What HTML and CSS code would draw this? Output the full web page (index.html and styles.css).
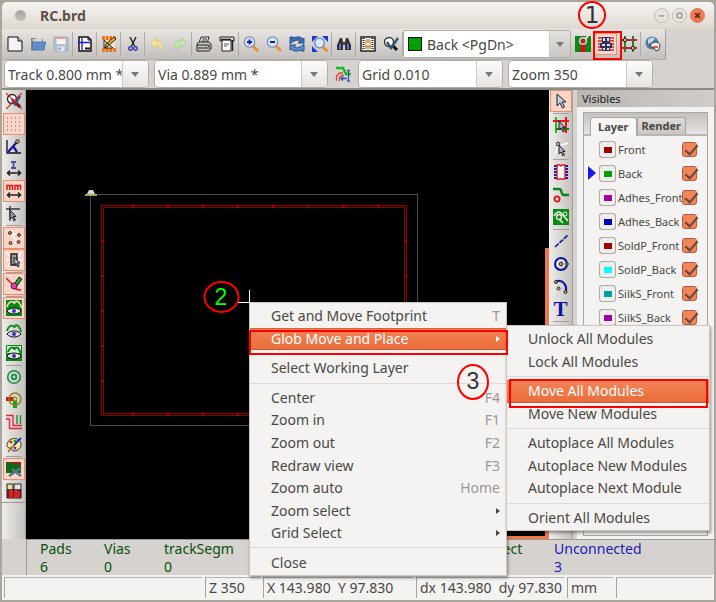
FILE: index.html
```html
<!DOCTYPE html>
<html lang="en">
<head>
    <meta charset="UTF-8">
    <meta name="viewport" content="width=device-width, initial-scale=1.0">
    <title>RC.brd</title>
    <link rel="stylesheet" href="styles.css">
</head>
<body>
    <div class="window">
        <header class="titlebar">
            <span class="title-dot"></span>
            <h1>RC.brd</h1>
            <div class="window-buttons">
                <button class="win-btn" aria-label="Minimize"><svg viewBox="0 0 14 14"><path d="M4 7.500h6"/></svg></button>
                <button class="win-btn" aria-label="Maximize"><svg viewBox="0 0 14 14"><path d="M4.500 4.500h5v5h-5z"/></svg></button>
                <button class="win-btn close" aria-label="Close window"><svg viewBox="0 0 14 14"><path d="M4.500 4.500l5 5m0-5l-5 5"/></svg></button>
            </div>
        </header>

        <!-- main toolbar -->
        <div class="toolbar">
            <div class="toolbar-strip">
                <button class="tool" aria-label="New board"><svg viewBox="0 0 16 16"><path d="M1 1h10l4 4v10H1z" fill="#f4f4f4" stroke="#111"/><path d="M11 1v4h4" fill="#ddd" stroke="#111"/></svg></button>
                <button class="tool" aria-label="Open board"><svg viewBox="0 0 16 16"><path d="M1 2h5l1 1h6v9H1z" fill="#8a8a84"/><path d="M3 3h9v6H3z" fill="#d8d8d8"/><path d="M3 6h12.500l-1.500 8H1.500z" fill="#5f8fc4" stroke="#4a78ae"/></svg></button>
                <button class="tool" aria-label="Save board"><svg viewBox="0 0 16 16"><rect x="1" y="1" width="14" height="14" rx="1" fill="#b3c0cf" stroke="#9aa9bb"/><path d="M3.500 1h9v7h-9z" fill="#f4f4f4"/><path d="M3.500 1h9v2h-9z" fill="#e09a9a"/><path d="M4.500 10.500h7V15h-7z" fill="#e4e8ec"/><path d="M5.500 11.500h2V14h-2z" fill="#8b99aa"/></svg></button>
                <span class="sep"></span>
                <button class="tool" aria-label="Page settings"><svg viewBox="0 0 16 16"><path d="M2 1h9l3 3v11H2z" fill="#fff" stroke="#111" stroke-width="1.500"/><path d="M11 1v3h3" fill="none" stroke="#111"/><path d="M5 2v12M1 6.500h12" stroke="#1616e0" stroke-width="1.300"/><path d="M8 12.500h5" stroke="#111" stroke-width="2"/></svg></button>
                <span class="sep"></span>
                <button class="tool" aria-label="Module editor"><svg viewBox="0 0 16 16"><path d="M2 3h12v10H2z" fill="#f0e3c8"/><path d="M2.500 0v4M6.200 0v4M9.800 0v4M13.500 0v4M2.500 12v4M6.200 12v4M9.800 12v4M13.500 12v4" stroke="#f36a10" stroke-width="2.600"/><path d="M4 12l1-4 8-7 2 2-8 7z" fill="#e9b21f" stroke="#222"/><path d="M12 12L3 4v8z" fill="none" stroke="#222"/></svg></button>
                <span class="sep"></span>
                <button class="tool" aria-label="Cut"><svg viewBox="0 0 16 16"><path d="M5 1l4.500 9M11 1L6.500 10" stroke="#222" stroke-width="1.400"/><circle cx="5.500" cy="12.500" r="1.800" fill="none" stroke="#2a2ab8" stroke-width="1.300"/><circle cx="10.500" cy="12.500" r="1.800" fill="none" stroke="#2a2ab8" stroke-width="1.300"/></svg></button>
                <span class="sep"></span>
                <button class="tool" aria-label="Undo"><svg viewBox="0 0 16 16"><path d="M7 2L1.500 7 7 12V9c3 0 5 1 4 5 4-3 4-9-4-9z" fill="#f1e59d" stroke="#d8ca7c"/></svg></button>
                <button class="tool" aria-label="Redo"><svg viewBox="0 0 16 16"><path d="M9 2l5.500 5L9 12V9c-3 0-5 1-4 5-4-3-4-9 4-9z" fill="#c2e8b0" stroke="#a2cf90"/></svg></button>
                <span class="sep"></span>
                <button class="tool" aria-label="Print board"><svg viewBox="0 0 16 16"><path d="M5 1h8l-2 6H3z" fill="#fff" stroke="#222"/><path d="M6 3h5M5.500 5h5" stroke="#222"/><path d="M1 8l2-2h10l2 2v5l-2 2H1z" fill="#c8c8c4" stroke="#222"/><path d="M1 9h12v4M2 12h10" fill="none" stroke="#222"/><path d="M9 10.500h2" stroke="#e0a020"/></svg></button>
                <button class="tool" aria-label="Plot"><svg viewBox="0 0 16 16"><path d="M1 1h14v4H1z" fill="#d8d8d4" stroke="#222"/><path d="M3 4h9v11H3z" fill="#fff" stroke="#222"/><path d="M5 8h5M5 10h3" stroke="#555"/><path d="M13.500 4v11M2 3.500h10" stroke="#222" stroke-width="1.500"/></svg></button>
                <span class="sep"></span>
                <button class="tool" aria-label="Zoom in"><svg viewBox="0 0 16 16"><path d="M9.500 9.500L14 14" stroke="#e99032" stroke-width="3" stroke-linecap="round"/><circle cx="6.500" cy="6" r="5.200" fill="#d8e8fa" stroke="#7d93bd" stroke-width="1.300"/><path d="M4 6h5M6.500 3.500v5" stroke="#1717a8" stroke-width="1.800"/></svg></button>
                <button class="tool" aria-label="Zoom out"><svg viewBox="0 0 16 16"><path d="M9.500 9.500L14 14" stroke="#e99032" stroke-width="3" stroke-linecap="round"/><circle cx="6.500" cy="6" r="5.200" fill="#d8e8fa" stroke="#7d93bd" stroke-width="1.300"/><path d="M4 6h5" stroke="#1717a8" stroke-width="1.800"/></svg></button>
                <button class="tool" aria-label="Redraw"><svg viewBox="0 0 16 16"><path d="M1 1h3l1 1c3-2 7-1 9 1l1-1v5H9l2-2C8 3 4 5 1 8z" fill="#3c6db3" stroke="#264f8d"/><path d="M15 15h-3l-1-1c-3 2-7 1-9-1l-1 1V9h6l-2 2c3 2 7 0 10-3z" fill="#5b8cc8" stroke="#264f8d"/></svg></button>
                <button class="tool" aria-label="Zoom auto"><svg viewBox="0 0 16 16"><path d="M0 0h6L0 6zM16 0v6l-6-6zM0 16v-6l6 6z" fill="#1c3bd0"/><path d="M10 10l4.500 4.500" stroke="#e99032" stroke-width="3" stroke-linecap="round"/><circle cx="7.500" cy="7" r="4.800" fill="#d5e9fb" stroke="#6f88b8" stroke-width="1.300"/></svg></button>
                <span class="sep"></span>
                <button class="tool" aria-label="Find"><svg viewBox="0 0 16 16"><path d="M4 2h2l1 4v8H1V9zM12 2h-2L9 6v8h6V9z" fill="#333"/><path d="M3 8h2v5H3zM11 8h2v5h-2z" fill="#5a6ae0"/><path d="M6 6h4v3H6z" fill="#444"/></svg></button>
                <span class="sep"></span>
                <button class="tool" aria-label="Read netlist"><svg viewBox="0 0 16 16"><path d="M1 1h14v14H1z" fill="#fff" stroke="#222" stroke-width="1.500"/><path d="M3.500 2v12M12.500 2v12" stroke="#222" stroke-width="2" stroke-dasharray="1 1"/><path d="M5 6c0-4 6-4 6 0v7H5z" fill="#e4a160"/><path d="M6 7h4v2H6z" fill="#fff"/></svg></button>
                <button class="tool" aria-label="Design rules check"><svg viewBox="0 0 16 16"><circle cx="6" cy="6" r="4.500" fill="#fff" stroke="#333" stroke-width="1.300"/><path d="M9 9l5 5" stroke="#111" stroke-width="3"/><path d="M4 6l4 6L15 2" fill="none" stroke="#31577a" stroke-width="2.500"/></svg></button>
                <span class="sep"></span>
                <div class="combo layer-combo">
                    <span class="layer-swatch"></span>
                    <select aria-label="Active layer"><option>Back &lt;PgDn&gt;</option></select>
                </div>
                <button class="tool" aria-label="Show active layer selections"><svg viewBox="0 0 16 16"><path d="M0 0h16v16H0z" fill="#0a8a14"/><path d="M5.500 7h5v9h-5z" fill="#d01018"/><path d="M9 5l4-5" stroke="#e9e9e9" stroke-width="2"/><circle cx="8" cy="5" r="3.300" fill="#c02028" stroke="#d8d8d8" stroke-width="1.500"/></svg></button>
                <button class="tool active" aria-label="Module mode"><svg viewBox="0 0 16 16"><path d="M0 2h16M0 5h16M0 8h16M0 11h16M0 14h16" stroke="#d8262c" stroke-width="1.600"/><path d="M4 1h8v6h2v5h-2v3H4v-3H2V7h2z" fill="#34345a"/><path d="M5 2h2v3H5zM9 2h2v3H9zM4 8h3v2H4zM9 8h3v2H9zM5 12h2v2H5zM9 12h2v2H9z" fill="#dfe2f4"/></svg></button>
                <button class="tool" aria-label="Track mode"><svg viewBox="0 0 16 16"><path d="M4 0v16M12 0v16" stroke="#178a2c" stroke-width="2"/><path d="M0 4h16M0 12h16" stroke="#c8202c" stroke-width="2"/><circle cx="4" cy="4" r="1.800" fill="#e7b880" stroke="#222"/><circle cx="12" cy="12" r="1.800" fill="#e7b880" stroke="#222"/></svg></button>
                <span class="sep"></span>
                <button class="tool" aria-label="FreeRoute"><svg viewBox="0 0 16 16"><circle cx="7" cy="7" r="6.500" fill="#4c7ba6"/><path d="M3 4c2-3 6-3 7-1L7 6 3 8z" fill="#c5d9ea"/><path d="M5 10c2-5 9-5 10-1l-1 5-3 1-2-3z" fill="#eee" stroke="#444"/><path d="M8 11h5" stroke="#d02a2a" stroke-width="1.500"/></svg></button>
            </div>
        </div>

        <!-- track / via / grid / zoom selectors -->
        <div class="options">
            <div class="combo track"><select aria-label="Track width"><option>Track 0.800 mm *</option></select></div>
            <div class="combo via"><select aria-label="Via size"><option>Via 0.889 mm *</option></select></div>
            <button class="tool" aria-label="Auto track width"><svg viewBox="0 0 16 16"><path d="M1 2h7l3 6h5" fill="none" stroke="#10c020" stroke-width="2.500"/><path d="M1.500 15v-5l3-3H8M4.500 15v-4l2-1.500H9" fill="none" stroke="#e04040" stroke-width="1.300"/><path d="M6 12.500h6M8 10.500l-2 2 2 2M13.500 5v10M12 4.500h3M12 15h3" fill="none" stroke="#2a5ab0" stroke-width="1.300"/></svg></button>
            <div class="combo grid-size"><select aria-label="Grid"><option>Grid 0.010</option></select></div>
            <div class="combo zoom"><select aria-label="Zoom"><option>Zoom 350</option></select></div>
        </div>

        <main class="workspace">
            <div class="side left">
                <div class="side-tools">
                    <button class="tool" aria-label="Disable DRC"><svg viewBox="0 0 16 16"><circle cx="6" cy="6" r="4.500" fill="#fff" stroke="#222" stroke-width="1.300"/><path d="M9 9l5 5" stroke="#111" stroke-width="3"/><path d="M6 6l3 5 5-8" stroke="#31577a" stroke-width="2.500" fill="none"/><path d="M0 0l16 16M16 0L0 16" stroke="#e01818" stroke-width="1.200"/></svg></button>
                    <button class="tool active" aria-label="Show grid"><svg viewBox="0 0 16 16"><path d="M1 2h14M1 6h14M1 10h14M1 14h14" stroke="#6b5a52" stroke-dasharray="1 3"/></svg></button>
                    <button class="tool" aria-label="Polar coordinates"><svg viewBox="0 0 16 16"><path d="M1 2v13h14" fill="none" stroke="#111" stroke-width="1.300"/><path d="M2 14L11 4M7 8l4 6" stroke="#1818a0" stroke-width="2.300"/><circle cx="11.500" cy="3.500" r="1.800" fill="#d6a27a" stroke="#222"/></svg></button>
                    <button class="tool" aria-label="Units in inches"><svg viewBox="0 0 16 16"><path d="M5 1h5M5 7h5M7.500 1v6" stroke="#4c4ca8" stroke-width="1.800"/><path d="M2 12h12M4 9.500L1.500 12 4 14.500M12 9.500l2.500 2.500-2.500 2.500" fill="none" stroke="#222" stroke-width="1.500"/></svg></button>
                    <button class="tool active" aria-label="Units in millimeters"><svg viewBox="0 0 16 16"><path d="M1 7V2.500h5.500V7M3.800 3v4M9 7V2.500h5.500V7M11.800 3v4" fill="none" stroke="#e01818" stroke-width="1.500"/><path d="M2 12h12M4 9.500L1.500 12 4 14.500M12 9.500l2.500 2.500-2.500 2.500" fill="none" stroke="#222" stroke-width="1.500"/></svg></button>
                    <button class="tool" aria-label="Change cursor shape"><svg viewBox="0 0 16 16"><path d="M0 3h14M4 0v15" stroke="#333" stroke-width="1.300"/><path d="M4 4v9l2-2 2 4 1.500-1-2-3.500H10z" fill="#8d93b0" stroke="#222"/></svg></button>
                    <span class="sep"></span>
                    <button class="tool active" aria-label="Show board ratsnest"><svg viewBox="0 0 16 16"><path d="M3 3l10 2M4 13l8-1M4 3l8 9" stroke="#fff" stroke-width="1.500"/><g fill="#c08a5c" stroke="#4a2e1c"><circle cx="4" cy="3" r="1.500"/><circle cx="13" cy="5" r="1.500"/><circle cx="4.500" cy="13" r="1.500"/><circle cx="12.500" cy="12" r="1.500"/></g></svg></button>
                    <button class="tool active" aria-label="Show module ratsnest"><svg viewBox="0 0 16 16"><path d="M1 1l14 14M15 1L1 15M0 8h16" stroke="#fff" stroke-width="1.500"/><path d="M5 2h6v11H5z" fill="#b09a90" stroke="#222" stroke-width="1.500"/><path d="M8 5v8l2-1.500 2 3.500 1.500-1-2-3H14z" fill="#aab2d0" stroke="#222"/></svg></button>
                    <span class="sep"></span>
                    <button class="tool active" aria-label="Auto delete track"><svg viewBox="0 0 16 16"><path d="M0 2l6 6c0 4 5 6 9 6" fill="none" stroke="#e01818" stroke-width="1.500"/><path d="M8 8l5-7 3 2-5 7z" fill="#27a637" stroke="#222"/><circle cx="8" cy="10" r="3" fill="#e040b0" stroke="#502040"/></svg></button>
                    <span class="sep"></span>
                    <button class="tool active" aria-label="Show filled zones"><svg viewBox="0 0 16 16"><path d="M0 0h16v16H0z" fill="#0a8a14"/><path d="M1 7c2-7 7-6 8-3M7 3c5-4 7 0 9 5" fill="none" stroke="#fbe0c0" stroke-width="1.600"/><path d="M1 11c3-4 11-4 14 0-3 4-11 4-14 0z" fill="#e8e8fa" stroke="#111"/><circle cx="8" cy="11" r="2" fill="#3838a0"/></svg></button>
                    <button class="tool" aria-label="Hide filled zones"><svg viewBox="0 0 16 16"><path d="M1 8c2-7 7-6 8-3M7 4c5-4 7 0 8 5" fill="none" stroke="#149030" stroke-width="2"/><path d="M1 11c3-4 11-4 14 0-3 4-11 4-14 0z" fill="#d8d8f0" stroke="#111"/><circle cx="8" cy="11" r="2" fill="#3838a0"/></svg></button>
                    <button class="tool" aria-label="Show zone outlines"><svg viewBox="0 0 16 16"><path d="M.500 .500h15v15H.500z" fill="#d9efd9" stroke="#0a8a14"/><path d="M0 8v8h16V8z" fill="#0a8a14"/><path d="M2 7c2-6 6-5 7-2M7 4c5-4 6 0 8 5" fill="none" stroke="#0a8a14" stroke-width="2"/><path d="M1 11c3-4 11-4 14 0-3 4-11 4-14 0z" fill="#e8e8fa" stroke="#111"/><circle cx="8" cy="11" r="2" fill="#3838a0"/></svg></button>
                    <span class="sep"></span>
                    <button class="tool" aria-label="Sketch pads"><svg viewBox="0 0 16 16"><circle cx="8" cy="8" r="6.300" fill="none" stroke="#149040" stroke-width="1.600"/><circle cx="8" cy="8" r="2.300" fill="none" stroke="#149040" stroke-width="1.800"/></svg></button>
                    <button class="tool" aria-label="Sketch vias"><svg viewBox="0 0 16 16"><path d="M0 7h8" stroke="#d01818" stroke-width="4"/><path d="M9 8v8" stroke="#15a015" stroke-width="4"/><circle cx="9" cy="7" r="6" fill="none" stroke="#8d7f10" stroke-width="1.500"/><circle cx="9" cy="7" r="2" fill="#d7cba0" stroke="#8d7f10"/></svg></button>
                    <button class="tool" aria-label="Sketch tracks"><svg viewBox="0 0 16 16"><path d="M0 1.500h7v10h9M0 5h3.500v9.500H16" fill="none" stroke="#e02a34" stroke-width="1.400"/><path d="M11 1v9M14.500 1v9" stroke="#238a3a" stroke-width="1.400"/></svg></button>
                    <button class="tool" aria-label="High contrast mode"><svg viewBox="0 0 16 16"><path d="M2 5c2-4 9-5 12-1 3 5-1 10-6 10-3 0-1-3-4-3S0 8 2 5z" fill="#f5eda0" stroke="#333"/><circle cx="5" cy="5" r="1.500" fill="#d02020"/><circle cx="9" cy="4" r="1.500" fill="#18a018"/><circle cx="9" cy="11" r="1.500" fill="#8818a0"/><path d="M15 1L8 8" stroke="#2034c0" stroke-width="2"/><path d="M8 8l-6 7" stroke="#a06020" stroke-width="1.500"/></svg></button>
                    <span class="sep"></span>
                    <button class="tool active" aria-label="Show layers manager"><svg viewBox="0 0 16 16"><path d="M0 1h15v11H0z" fill="#116a1c"/><path d="M0 1h15v3z" fill="#a02020"/><path d="M3 15L15 7M6 8l9 7" stroke="#5d7285" stroke-width="2.500"/></svg></button>
                    <button class="tool" aria-label="Microwave tools"><svg viewBox="0 0 16 16"><path d="M1 1h6v6H1z" fill="#f0dca0" stroke="#222"/><path d="M8 1h7v6H8z" fill="#e4e4e4" stroke="#222"/><path d="M1 7h14v8H1z" fill="#8c1018" stroke="#222"/><path d="M4 15V8h2v7M9 15V8h2v7M13 15V8" fill="none" stroke="#ee3030" stroke-width="1.300"/></svg></button>
                </div>
            </div>

            <div class="canvas">
                <svg class="board" width="520" height="440">
                    <rect x="64.500" y="104.500" width="327" height="231" fill="none" stroke="#4c4c4c"/>
                    <g fill="none" stroke="#8c0000">
                        <rect x="75.500" y="115.500" width="305" height="210"/>
                        <rect x="77.500" y="117.500" width="301" height="206"/>
                    </g>
                    <g fill="none" stroke="#b40000" stroke-width="2">
                        <path d="M106 116.500h274M106 324.500h274" stroke-dasharray="2 33"/>
                        <path d="M76.500 150v170M379.500 150v170" stroke-dasharray="2 33"/>
                    </g>
                    <path d="M59 104h12v2H59z" fill="#a8a85c"/>
                    <path d="M61 104l2-4h4l2 4z" fill="#d8d8e4"/>
                    <path d="M223.500 200v12M212 212.500h12" stroke="#fff"/>
                </svg>
                <span class="scroll-v"></span>
                <span class="scroll-h"></span>
            </div>

            <div class="side right">
                <div class="side-tools">
                    <button class="tool active" aria-label="Select"><svg viewBox="0 0 16 16"><path d="M4 1v12l3-3 2.500 5 2-1-2.500-5h4z" fill="#c3c9e8" stroke="#222"/></svg></button>
                    <span class="sep"></span>
                    <button class="tool" aria-label="Highlight net"><svg viewBox="0 0 16 16"><path d="M3 0v16" stroke="#18c018" stroke-width="2"/><path d="M0 4h16M13 0v16" stroke="#e01818" stroke-width="2"/><path d="M3 12h13" stroke="#187818" stroke-width="2"/><path d="M6 4v9l2-2 2 4 1.500-1-2-3.500H12z" fill="#aab" stroke="#222"/></svg></button>
                    <button class="tool" aria-label="Show local ratsnest"><svg viewBox="0 0 16 16"><path d="M0 3l6 3 9-3M5 6l-3 8" stroke="#fff" fill="none" stroke-width="1.500"/><circle cx="5" cy="4" r="1.800" fill="#d8c0b0" stroke="#333"/><path d="M6 5v9l2-2 2 4 1.500-1-2-3.500H12z" fill="#aab2d0" stroke="#222"/></svg></button>
                    <span class="sep"></span>
                    <button class="tool" aria-label="Add module"><svg viewBox="0 0 16 16"><path d="M2.500 1v14M13.500 1v14" stroke="#1818d0" stroke-width="3" stroke-dasharray="2 1"/><path d="M4 1h3l1 1 1-1h3v14H4z" fill="#f5f5ee" stroke="#e01818" stroke-width="1.300"/></svg></button>
                    <button class="tool" aria-label="Add track"><svg viewBox="0 0 16 16"><path d="M0 2h6c4 0 1 6 5 6h5" fill="none" stroke="#128020" stroke-width="2.300"/><circle cx="4" cy="12" r="2.600" fill="#f4d0d0" stroke="#d01818" stroke-width="1.800"/></svg></button>
                    <button class="tool" aria-label="Add zone"><svg viewBox="0 0 16 16"><path d="M0 0h16v16H0z" fill="#0a8a14"/><path d="M1 7c2-4 5-5 7-3l7 8M6 10l4 4" fill="none" stroke="#f0f4e8" stroke-width="1.600"/><circle cx="6" cy="8" r="2.500" fill="#0a8a14" stroke="#f0f4e8" stroke-width="1.300"/><circle cx="12" cy="5" r="2" fill="none" stroke="#f0f4e8"/></svg></button>
                    <span class="sep"></span>
                    <button class="tool" aria-label="Add line"><svg viewBox="0 0 16 16"><path d="M2 14L15 2" stroke="#1c1ca0" stroke-width="1.700" stroke-dasharray="5 1"/></svg></button>
                    <button class="tool" aria-label="Add circle"><svg viewBox="0 0 16 16"><circle cx="8" cy="8" r="6" fill="none" stroke="#10109c" stroke-width="2"/><circle cx="8" cy="8" r="1.700" fill="#d6a27a" stroke="#222"/><circle cx="14" cy="8" r="1.300" fill="#d6a27a" stroke="#222"/></svg></button>
                    <button class="tool" aria-label="Add arc"><svg viewBox="0 0 16 16"><path d="M4 2c6-1 10 4 9 10" fill="none" stroke="#10109c" stroke-width="2"/><g fill="#d6a27a" stroke="#222"><circle cx="3" cy="3" r="1.500"/><circle cx="5.500" cy="9.500" r="1.500"/><circle cx="12.500" cy="13" r="1.500"/></g></svg></button>
                    <button class="tool text-tool" aria-label="Add text">T</button>
                    <span class="sep"></span>
                </div>
            </div>

            <aside class="visibles">
                <h2>Visibles</h2>
                <div class="notebook">
                    <div class="tabs">
                        <button class="tab selected">Layer</button>
                        <button class="tab">Render</button>
                    </div>
                    <div class="layers">
                        <div class="layer"><span class="marker"></span><button class="swatch front" aria-label="Front color"></button><label for="l1">Front</label><input type="checkbox" id="l1" checked></div>
                        <div class="layer"><span class="marker current"></span><button class="swatch back" aria-label="Back color"></button><label for="l2">Back</label><input type="checkbox" id="l2" checked></div>
                        <div class="layer"><span class="marker"></span><button class="swatch purple" aria-label="Adhes_Front color"></button><label for="l3">Adhes_Front</label><input type="checkbox" id="l3" checked></div>
                        <div class="layer"><span class="marker"></span><button class="swatch blue" aria-label="Adhes_Back color"></button><label for="l4">Adhes_Back</label><input type="checkbox" id="l4" checked></div>
                        <div class="layer"><span class="marker"></span><button class="swatch front" aria-label="SoldP_Front color"></button><label for="l5">SoldP_Front</label><input type="checkbox" id="l5" checked></div>
                        <div class="layer"><span class="marker"></span><button class="swatch cyan" aria-label="SoldP_Back color"></button><label for="l6">SoldP_Back</label><input type="checkbox" id="l6" checked></div>
                        <div class="layer"><span class="marker"></span><button class="swatch teal" aria-label="SilkS_Front color"></button><label for="l7">SilkS_Front</label><input type="checkbox" id="l7" checked></div>
                        <div class="layer"><span class="marker"></span><button class="swatch purple" aria-label="SilkS_Back color"></button><label for="l8">SilkS_Back</label><input type="checkbox" id="l8" checked></div>
                    </div>
                </div>
            </aside>
        </main>

        <!-- board info -->
        <dl class="info">
            <div><dt>Pads</dt><dd>6</dd></div>
            <div><dt>Vias</dt><dd>0</dd></div>
            <div><dt>trackSegm</dt><dd>0</dd></div>
            <div><dt>Connect</dt></div>
            <div class="unconnected"><dt>Unconnected</dt><dd>3</dd></div>
        </dl>

        <footer class="status">
            <span></span>
            <span>Z 350</span>
            <span>X 143.980&nbsp; Y 97.830</span>
            <span>dx 143.980&nbsp; dy 97.830</span>
            <span>mm</span>
            <span></span>
        </footer>
    </div>

    <!-- context menu -->
    <div class="menu context">
        <button>Get and Move Footprint <kbd>T</kbd></button>
        <button class="hot">Glob Move and Place <i class="arrow"></i></button>
        <hr>
        <button>Select Working Layer</button>
        <hr>
        <button>Center <kbd>F4</kbd></button>
        <button>Zoom in <kbd>F1</kbd></button>
        <button>Zoom out <kbd>F2</kbd></button>
        <button>Redraw view <kbd>F3</kbd></button>
        <button>Zoom auto <kbd>Home</kbd></button>
        <button>Zoom select <i class="arrow"></i></button>
        <button>Grid Select <i class="arrow"></i></button>
        <hr>
        <button>Close</button>
    </div>

    <div class="menu submenu">
        <button>Unlock All Modules</button>
        <button>Lock All Modules</button>
        <hr>
        <button class="hot">Move All Modules</button>
        <button>Move New Modules</button>
        <hr>
        <button>Autoplace All Modules</button>
        <button>Autoplace New Modules</button>
        <button>Autoplace Next Module</button>
        <hr>
        <button>Orient All Modules</button>
    </div>

    <!-- numbered steps -->
    <svg class="steps">
        <rect x="594" y="32" width="27" height="27"/>
        <rect x="250" y="331" width="257" height="23"/>
        <rect x="510" y="380" width="197" height="27"/>
        <circle cx="592" cy="15" r="13"/>
        <ellipse cx="221.500" cy="297" rx="17" ry="15"/>
        <ellipse cx="473" cy="382" rx="15" ry="17"/>
        <text class="one" x="592" y="23">1</text>
        <text class="two" x="221" y="305">2</text>
        <text x="473" y="389">3</text>
    </svg>
</body>
</html>
```
FILE: styles.css
```css
* {
    box-sizing: border-box;
}

body {
    position: relative;
    display: flex;
    min-height: 100vh;
    margin: 0;
    padding: 2px;
    background: #aaa59d;
    color: #4a4845;
    font-family: "Noto Sans", "Open Sans", sans-serif;
    font-size: 14px;
}

button, select, kbd {
    font: inherit;
    color: inherit;
}

button {
    margin: 0;
    padding: 0;
    border: none;
    background: none;
}

.window {
    flex: 1;
    display: flex;
    flex-direction: column;
    min-width: 0;
    background: #d6d2cf;
    border-radius: 5px 5px 0 0;
    overflow: hidden;
}

/* title bar */
.titlebar {
    display: flex;
    align-items: center;
    height: 27px;
    padding: 0 9px 0 13px;
    background: linear-gradient(#f6f5f3, #dfd8d0);
}

.title-dot {
    width: 11px;
    height: 11px;
    border-radius: 50%;
    background: linear-gradient(#a5a29d, #c6c2bd);
}

h1 {
    flex: 1;
    margin: 0 0 0 14px;
    font-size: 14px;
    font-weight: bold;
    color: #5c5048;
}

.window-buttons {
    display: flex;
    gap: 3px;
}

.win-btn {
    width: 15px;
    height: 15px;
    border: 1px solid #c4bdb5;
    border-radius: 50%;
    background: #e9e4df;
}

.win-btn svg {
    display: block;
    width: 13px;
    height: 13px;
    fill: none;
    stroke: #77706a;
}

.win-btn.close {
    border-color: #d9805f;
    background: #ee7a52;
}

.win-btn.close svg {
    stroke: #6b2d18;
    stroke-width: 2;
}

/* toolbars */
.toolbar {
    display: flex;
    height: 31px;
}

.toolbar-strip {
    display: flex;
    align-items: center;
    padding: 0 1px;
    border-right: 1px solid #a5a29e;
    border-bottom: 1px solid #b0adaa;
    background: linear-gradient(#e8e5e2, #c2bfbd);
}

.tool {
    display: flex;
    flex: none;
    align-items: center;
    justify-content: center;
    width: 23px;
    height: 22px;
}

.tool svg {
    flex: none;
    width: 16px;
    height: 16px;
}

.tool.active {
    border: 1px solid #ea8e6c;
    background: #f9d6c8;
}

.toolbar .sep {
    width: 1px;
    height: 24px;
    background: #aeaba8;
}

.combo {
    position: relative;
    display: flex;
    align-items: center;
    height: 28px;
    border: 1px solid #b3aea9;
    border-radius: 4px;
    background: #fff;
    overflow: hidden;
}

.combo select {
    flex: 1;
    min-width: 0;
    height: 26px;
    padding: 0 0 0 3px;
    border: none;
    background: transparent;
    appearance: none;
}

.combo::before {
    content: "";
    position: absolute;
    right: 0;
    top: 0;
    width: 25px;
    height: 100%;
    border-left: 1px solid #cfcac5;
    background: linear-gradient(#fdfcfb, #e6e3e0);
    pointer-events: none;
}

.combo::after {
    content: "";
    position: absolute;
    right: 9px;
    top: 11px;
    border: 4px solid transparent;
    border-top: 5px solid #7b7773;
    border-bottom: none;
    pointer-events: none;
}

.layer-combo {
    width: 168px;
    border-radius: 2px;
}

.layer-combo::before {
    width: 20px;
    background: linear-gradient(#e4e1de, #c9c6c3);
}

.layer-combo::after {
    right: 6px;
}

.layer-combo select {
    padding-left: 5px;
}

.layer-swatch {
    width: 14px;
    height: 14px;
    margin-left: 4px;
    border: 1px solid #111;
    background: #00a000;
}

.options {
    display: flex;
    align-items: center;
    gap: 5px;
    height: 30px;
    padding: 0 2px;
    border-bottom: 2px solid #8d8b88;
}

.track, .grid-size, .zoom {
    width: 145px;
}

.via {
    width: 174px;
}

.options .tool {
    width: 20px;
}

/* workspace */
.workspace {
    flex: 1;
    display: flex;
}

.side {
    width: 24px;
    border-right: 1px solid #a5a29e;
    background: linear-gradient(90deg, #efedeb, #c4c1be);
}

.side-tools {
    display: flex;
    flex-direction: column;
    align-items: center;
    justify-content: space-between;
    height: 413px;
    border-bottom: 1px solid #9b9895;
}

.right .side-tools {
    height: 232px;
    border-bottom: none;
}

.side .tool {
    width: 22px;
}

.side .sep {
    width: 16px;
    height: 1px;
    background: #a3a09d;
}

.text-tool {
    font-family: "Liberation Serif", serif;
    font-size: 21px;
    font-weight: bold;
    line-height: 22px;
    color: #1010a0;
}

.canvas {
    position: relative;
    flex: 1;
    min-width: 0;
    background: #000;
    overflow: hidden;
}

.board {
    display: block;
}

.scroll-v, .scroll-h {
    position: absolute;
    right: 0;
    bottom: 0;
    background: #ee7a4b;
}

.scroll-v {
    top: 158px;
    width: 4px;
}

.scroll-h {
    width: 200px;
    height: 3px;
}

.visibles {
    display: flex;
    flex-direction: column;
    width: 141px;
    padding-left: 4px;
}

h2 {
    margin: 0;
    padding: 0 5px;
    background: linear-gradient(90deg, #b9b6b4, #d0cdcb);
    font-size: 11px;
    font-weight: normal;
    line-height: 17px;
    color: #222;
}

.notebook {
    flex: 1;
    display: flex;
    flex-direction: column;
    padding: 5px 6px 3px;
    background: #f4f3f1;
}

.tabs {
    display: flex;
    height: 24px;
    padding: 4px 6px 0;
    border: 1px solid #aaa7a4;
    border-bottom: 2px solid #b8b5b2;
    background: linear-gradient(#c3c0be, #e6e4e2);
}

.tab {
    height: 17px;
    padding: 0 4px;
    border: 1px solid #a8a5a2;
    border-bottom: none;
    border-radius: 3px 3px 0 0;
    background: linear-gradient(#dedbd8, #c9c6c3);
    font-size: 11px;
    font-weight: bold;
    line-height: 16px;
}

.tab.selected {
    height: 19px;
    padding: 0 7px;
    background: #f7f6f5;
}

.layers {
    flex: 1;
    display: grid;
    grid-auto-rows: 24px;
    border: 1px solid #aaa7a4;
    border-top: none;
    padding: 1px 10px 0 4px;
}

.layer {
    display: flex;
    align-items: center;
    font-size: 11px;
}

.marker {
    width: 8px;
    margin-right: 3px;
}

.marker.current {
    border: 7px solid transparent;
    border-left: 8px solid #1c1ce8;
    border-right: none;
}

.swatch {
    flex: none;
    width: 17px;
    height: 17px;
    border: 1px solid #b0aba6;
    border-radius: 3px;
    background-color: #a00000;
    box-shadow: inset 0 5px #f0eeec, inset 0 -4px #f0eeec, inset 4px 0 #f0eeec, inset -3px 0 #f0eeec;
}

.swatch.back { background-color: #00a000; }
.swatch.purple { background-color: #a000a0; }
.swatch.blue { background-color: #0000c0; }
.swatch.cyan { background-color: #00ffff; }
.swatch.teal { background-color: #00a0a0; }

.layer label {
    flex: 1;
    min-width: 0;
    margin-left: 2px;
}

.layer input {
    flex: none;
    width: 15px;
    height: 15px;
    margin: 0;
    border: 1px solid #b75a38;
    border-radius: 3px;
    background: #f0845c;
    appearance: none;
}

.layer input:checked::before {
    content: "";
    display: block;
    width: 11px;
    height: 5px;
    margin: 2px 0 0 2px;
    border: 2px solid #6e4434;
    border-top: none;
    border-right: none;
    transform: rotate(-48deg);
}

/* info panel and status bar */
.info {
    display: grid;
    grid-template-columns: 64px 60px 1fr 86px 160px;
    height: 36px;
    margin: 0 0 0 24px;
    padding-left: 13px;
    border-top: 1px solid #9b9895;
    border-left: 1px solid #9b9895;
    color: #0b500b;
    line-height: 18px;
}

.info dd {
    margin: 0;
}

.info .unconnected {
    color: #1c1cb8;
}

.status {
    display: grid;
    grid-template-columns: 198px 55px 150px 148px 46px 1fr;
    gap: 3px;
    height: 25px;
    padding: 2px;
    background: #f4f3f1;
}

.status span {
    padding: 0 3px;
    border-top: 1px solid #b5b2af;
    border-left: 1px solid #a5a29f;
    line-height: 20px;
    white-space: nowrap;
}

/* menus */
.menu {
    position: absolute;
    display: flex;
    flex-direction: column;
    padding: 2px 0 1px;
    border: 1px solid #cdc6bf;
    background: #f4f3f1;
    box-shadow: 1px 2px 3px rgba(0, 0, 0, 0.4);
}

.context {
    left: 249px;
    top: 302px;
    width: 258px;
    min-height: 274px;
}

.submenu {
    left: 506px;
    top: 325px;
    width: 204px;
    min-height: 206px;
}

.menu button {
    flex: 1;
    display: flex;
    align-items: center;
    justify-content: space-between;
    padding: 0 6px 0 21px;
    line-height: 20px;
    white-space: nowrap;
}

.menu hr {
    width: 100%;
    height: 1px;
    margin: 3px 0;
    border: none;
    background: #dedad6;
}

.menu kbd {
    color: #9b9896;
}

.menu .hot {
    background: linear-gradient(#f58457, #e96c3a);
    box-shadow: inset 0 1px #d9653b, inset 0 -1px #c95a32;
    color: #fff;
}

.arrow {
    border: 3px solid transparent;
    border-left: 4px solid currentColor;
    border-right: none;
}

.steps {
    position: absolute;
    left: 0;
    top: 0;
    width: 100%;
    height: 100%;
    fill: none;
    stroke: #ff0000;
    stroke-width: 2;
    pointer-events: none;
}

.steps text {
    font-family: "Liberation Sans", sans-serif;
    font-size: 23px;
    text-anchor: middle;
    fill: #333;
    stroke: none;
}

.steps .one {
    font-family: "DejaVu Sans", sans-serif;
}

.steps .two {
    fill: #00ff00;
}
```
